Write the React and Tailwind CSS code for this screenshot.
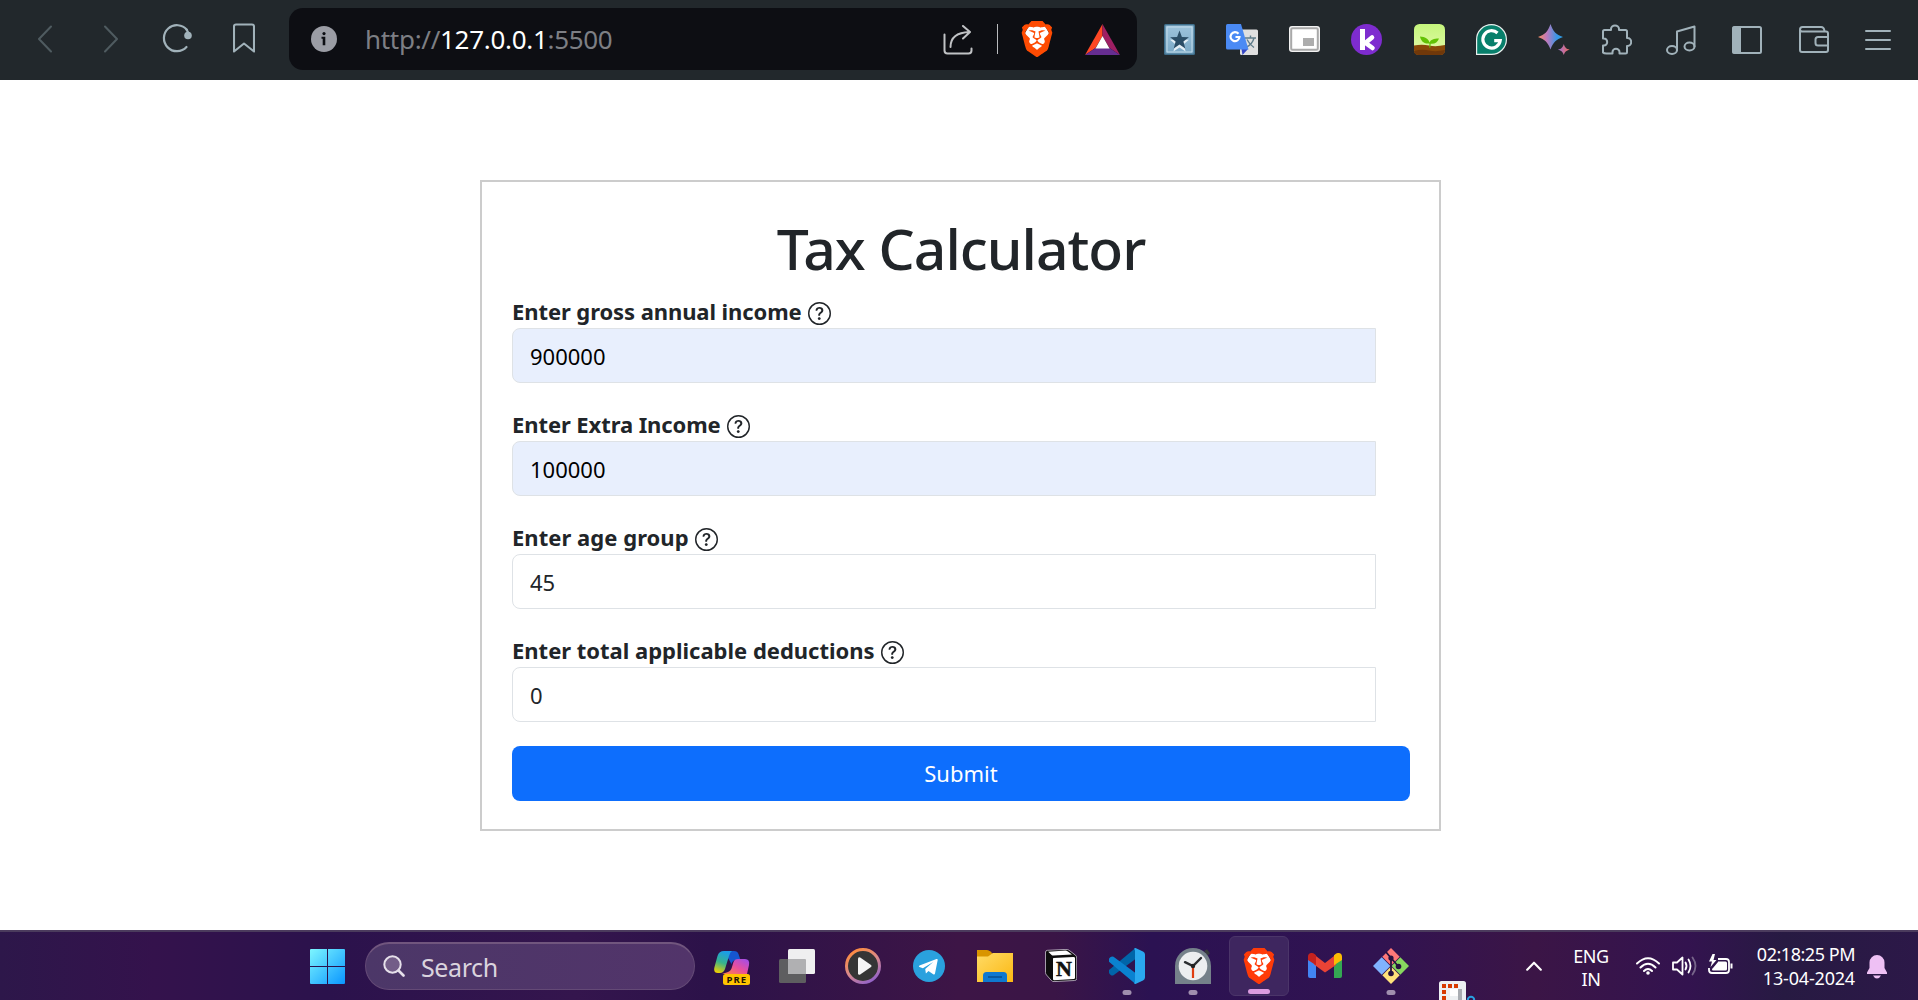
import React from "react";
import { BsQuestionCircle } from "react-icons/bs";
import { SiBrave } from "react-icons/si";

const font = "font-['Noto_Sans','Open_Sans',sans-serif]";

function Brave({ className }) {
  return (
    <span className={"relative flex shrink-0 items-center justify-center " + className}>
      <svg viewBox="0 0 24 24" className="absolute size-9">
        <path fill="#fff" d="M6.500 3.500h11l2.500 4.500-3 10-5 2-5-2L4 8z" />
      </svg>
      <SiBrave className="relative size-9 shrink-0" />
    </span>
  );
}

function Stroke({ className, children, color = "#a1b2ba", w = 2, vb }) {
  return (
    <svg viewBox={vb} className={"block shrink-0 " + className} fill="none" stroke={color} strokeWidth={w} strokeLinecap="round" strokeLinejoin="round">
      {children}
    </svg>
  );
}

function Toolbar() {
  return (
    <header className="flex h-20 items-start bg-[#22282c] pt-2">
      <Stroke vb="0 0 15 28" color="#4f5b60" className="ml-[37px] mt-[17px] h-7 w-[15px]"><path d="M14 1.500 2 14l12 12.500" /></Stroke>
      <Stroke vb="0 0 15 28" color="#4f5b60" className="ml-[52px] mt-[17px] h-7 w-[15px]"><path d="M1 1.500 13 14 1 26.500" /></Stroke>
      <Stroke vb="0 0 30 30" className="ml-[43px] mt-[15px] size-[30px]" w="2.200">
        <path d="M25 7a13 13 0 1 0-.5 17" />
        <circle cx="26" cy="12.500" r="3.800" fill="#a1b2ba" stroke="none" />
        <path d="M24.500 6.500 27 11" />
      </Stroke>
      <Stroke vb="0 0 22 30" className="ml-[41px] mt-[15px] h-[30px] w-[22px]" w="2.100">
        <path d="M3 1.500h16q2 0 2 2v25L11 20.500 1 28.500v-25q0-2 2-2z" />
      </Stroke>

      <div className="ml-[34px] flex h-[62px] w-[848px] items-center rounded-[14px] bg-[#0d0e13] pl-[22px]">
        <svg viewBox="0 0 26 26" className="size-[26px] shrink-0">
          <circle cx="13" cy="13" r="13" fill="#9b9da5" />
          <circle cx="13" cy="7.600" r="1.600" fill="#0d0e13" />
          <path fill="#0d0e13" d="M10.500 10.800h3.800v8.400h-2.600v-6.400h-1.200z" />
        </svg>
        <div className="ml-[28px] w-[251px] whitespace-nowrap text-[26px] leading-none tracking-[-0.3px] text-[#7d7f84]">
          http://<span className="text-white">127.0.0.1</span>:5500
        </div>
        <Stroke vb="0 0 30 30" color="#c0c2c5" className="ml-[327px] mt-0.5 size-[30px]">
          <path d="M1.500 9.500v16q0 3 3 3h21q3 0 3-3v-2" />
          <path d="M7.500 22c0-9 6-14.500 19-15M20 1l7 6-7 6.500" />
        </Stroke>
        <div className="ml-6 h-[30px] w-px bg-[#b9bbbe]" />
        <Brave className="ml-[23px] h-[35px] w-[31px] text-[#fe4b02]" />
        <svg viewBox="0 0 35 31" className="ml-[33px] h-[31px] w-[35px]">
          <path fill="#ff4724" d="M17.500 0 0 31l10.500-7 7-12z" />
          <path fill="#9e1f63" d="M17.500 0 35 31l-10.500-7-7-12z" />
          <path fill="#662d91" d="M0 31h35l-10.500-7h-14z" />
          <path fill="#fff" d="m17.500 12 7 12.500h-14z" />
        </svg>
      </div>

      <svg viewBox="0 0 31 31" className="ml-[27px] mt-4 size-[31px]">
        <defs><linearGradient id="starBg" x2="0" y2="1"><stop stopColor="#9dc3dc" /><stop offset="1" stopColor="#7ba9c6" /></linearGradient></defs>
        <rect width="31" height="31" rx="1.500" fill="#3f6f8c" />
        <path fill="url(#starBg)" d="M1.500 1.500h28v28h-28z" />
        <path fill="none" stroke="#c4dcea" d="M3 3h25v25H3z" />
        <path fill="#e4eef5" d="m15.500 9 2.600 6.500 6.900.3-5.400 4.500 2 7.100-6.100-4-6.100 4 2-7.100L6 15.800l6.900-.3z" />
        <path fill="#2b4d66" d="m15.500 6.500 2.400 6.500 7 .3-5.500 4.300 1.900 6.900-5.800-3.900-5.800 3.900 1.900-6.900-5.500-4.300 7-.3z" />
      </svg>
      <svg viewBox="0 0 32 31" className="ml-[31px] mt-4 h-[31px] w-8">
        <rect x="14" y="5.500" width="18" height="25.500" rx="1.500" fill="#e0e0e0" />
        <path fill="none" stroke="#607d8b" strokeWidth="1.400" d="M19 14h11M24.500 11.500V14M28 14c-1 4-4 7.500-8 9.500M21 15.500c1.500 3 4 6 7 8" />
        <path fill="#3547c5" d="M15.500 25H22l-5.500 6z" />
        <path fill="#4a8af4" d="M1.500 0H15l7.500 25.500h-21Q0 25.500 0 24V1.500Q0 0 1.500 0z" />
        <path fill="none" stroke="#fff" strokeWidth="2.200" d="M12.500 9.800a4.500 4.500 0 1 0 1 3.200H9.500" />
      </svg>
      <svg viewBox="0 0 31 26" className="ml-[31px] mt-[18px] h-[26px] w-[31px]">
        <rect width="31" height="26" rx="3" fill="#f2f2f2" />
        <rect x="2.200" y="2.200" width="26.600" height="21.600" rx="1.500" fill="#fff" stroke="#a9a9a9" strokeWidth="2" />
        <path fill="#adadad" d="M14 12h11v8H14z" />
      </svg>
      <svg viewBox="0 0 31 31" className="ml-[31px] mt-4 size-[31px]">
        <circle cx="15.500" cy="15.500" r="15.500" fill="#7e2ccf" />
        <path fill="none" stroke="#fff" strokeWidth="5" d="M11.500 5v21" />
        <path fill="none" stroke="#fff" strokeWidth="4.600" strokeLinecap="round" d="m21 13.500-6.500 5.300 7 5.200" />
      </svg>
      <svg viewBox="0 0 31 31" className="ml-8 mt-4 size-[31px]">
        <defs><linearGradient id="sky" x2="0" y2="1"><stop stopColor="#c5f57c" /><stop offset="1" stopColor="#e3fbaa" /></linearGradient></defs>
        <rect width="31" height="31" rx="5.500" fill="url(#sky)" />
        <path fill="#8a4a08" d="M0 21.500q8-1.500 15 0t16-.5v5q0 5-5 5H5q-5 0-5-5z" />
        <path fill="#70380a" d="M0 27q8-2 15-.5t16-.5q0 5-5 5H5q-5 0-5-4z" />
        <path fill="#62c204" d="M15.400 19.500C9 20 7 16.500 6 12.500c5 .5 8.500 2 9.500 6 1.500-3 4-4 9.500-4-1.500 4-4 5.500-8.300 5.200l-.4 4h-1z" />
      </svg>
      <svg viewBox="0 0 31 31" className="ml-[31px] mt-4 size-[31px]">
        <path fill="#087f6b" stroke="#e9efee" strokeWidth="1.200" d="M.6 30.400V15.500A14.900 14.900 0 1 1 15.500 30.400z" />
        <path fill="none" stroke="#fff" strokeWidth="3.200" d="M21.500 9a8.700 8.700 0 1 0 2.700 7.600h-6" />
      </svg>
      <svg viewBox="0 0 32 31" className="ml-[31px] mt-4 h-[31px] w-8">
        <defs>
          <linearGradient id="spark" x1="0" x2="1"><stop offset=".05" stopColor="#f08a6a" /><stop offset=".35" stopColor="#bf79bd" /><stop offset=".75" stopColor="#3a96e6" /><stop offset="1" stopColor="#2ba0e8" /></linearGradient>
          <linearGradient id="spark2" x1="0" x2="1"><stop stopColor="#9a74d8" /><stop offset="1" stopColor="#f26a5a" /></linearGradient>
        </defs>
        <path fill="url(#spark)" d="M12.500 0c2.500 7.500 5.500 10.500 12.500 13-7 2.500-10 5.500-12.500 12.500C10 18.500 7 15.500 0 13 7 10.500 10 7.500 12.500 0z" />
        <path fill="url(#spark2)" d="M25.800 20c1 3.500 2.300 4.800 5.900 5.700-3.600.9-4.900 2-5.900 5.300-1-3.300-2.300-4.400-5.900-5.300 3.600-.9 4.900-2.200 5.900-5.700z" />
      </svg>
      <Stroke vb="0 0 31 31" className="ml-[31px] mt-4 size-[31px]">
        <path d="M3.500 6h6.500V5a4 3.500 0 0 1 8 0v1h6.500q1.500 0 1.500 1.500V14h.5a3.700 4 0 0 1 0 8H26v6q0 1.500-1.500 1.500h-6V28a3.500 3.200 0 0 0-7 0v1.500h-6Q3 29.500 2 28.500v-7h1a3.200 3.500 0 0 0 0-7H2v-7Q2 6 3.500 6z" />
      </Stroke>
      <Stroke vb="0 0 30 30" className="ml-[34px] mt-[17px] size-[30px]">
        <ellipse cx="6" cy="25" rx="5" ry="4" /><ellipse cx="23.500" cy="21.500" rx="5" ry="4" />
        <path d="M11 25V6.500L28.500 1.500v20" />
      </Stroke>
      <Stroke vb="0 0 30 28" className="ml-9 mt-[18px] h-7 w-[30px]">
        <rect x="1" y="1" width="28" height="26" rx="1.500" /><path fill="#a1b2ba" d="M1.500 1.500H8v25H1.500z" />
      </Stroke>
      <Stroke vb="0 0 30 27" className="ml-[37px] mt-[18px] h-[27px] w-[30px]">
        <path d="M1 4v20q0 2 2 2h24q2 0 2-2V7.500q0-2-2-2H3.500Q1 5.500 1 3.500 1 1 3.500 1H22q3 0 3.500 4M29 11H19q-2.500 0-2.500 2.500v3.500q0 2.500 2.500 2.500h10" />
      </Stroke>
      <Stroke vb="0 0 26 22" className="ml-[36px] mt-[21px] h-[22px] w-[26px]"><path d="M1 2h24M1 11h24M1 20h24" /></Stroke>
    </header>
  );
}

const fields = [
  { label: "Enter gross annual income", value: "900000", filled: true, ls: "tracking-[-0.09px]" },
  { label: "Enter Extra Income", value: "100000", filled: true, ls: "tracking-[-0.09px]" },
  { label: "Enter age group", value: "45", ls: "tracking-[0.04px]" },
  { label: "Enter total applicable deductions", value: "0", ls: "tracking-[-0.01px]" },
];

function Calculator() {
  return (
    <main className="flex h-[850px] items-start bg-white pl-[480px] pt-[100px] text-[#212529]">
      <form className="h-[651px] w-[961px] border-2 border-[#ccc] pl-[30px] pr-[29px] pt-[30px]" onSubmit={(e) => e.preventDefault()}>
        <h1 className="h-[82px] whitespace-nowrap text-center text-[57px] font-[550] leading-[72px] tracking-[-1px]">Tax Calculator</h1>
        {fields.map((f) => (
          <div key={f.label} className="mb-[23px] h-[90px]">
            <label className={"flex h-[34px] items-center whitespace-nowrap text-[22px] font-bold leading-[34px] " + f.ls}>
              {f.label}
              <BsQuestionCircle className="ml-[6px] mt-1 size-[23px]" />
            </label>
            <input
              readOnly
              value={f.value}
              className={"block h-[55px] w-[864px] rounded-l-lg border border-[#dee2e6] px-[17px] text-[22px] outline-none " + (f.filled ? "bg-[#e8effd] text-black" : "bg-white")}
            />
          </div>
        ))}
        <button className="block h-[55px] w-[898px] rounded-lg bg-[#0d6efd] text-[22px] text-white">Submit</button>
      </form>
    </main>
  );
}

const Dot = () => <span className="absolute top-[42px] left-1/2 h-[5px] w-[9px] -translate-x-1/2 rounded-full bg-[#a08fae]" />;

function Taskbar() {
  return (
    <footer className="flex h-[70px] items-start overflow-hidden border-t-2 border-[#4b3b5d] bg-[linear-gradient(90deg,#2d174a_0%,#34124c_8%,#2b124c_17%,#34154d_30%,#2c1249_37%,#3d1546_50%,#3a1546_55%,#2b1252_60%,#311351_72%,#3b1546_80%,#33134f_88%,#271a42_93%,#2c1848_100%)]">
      <svg viewBox="0 0 35 35" className="ml-[310px] mt-[17px] size-[35px] shrink-0">
        <defs><linearGradient id="win" x2="1" y2="1"><stop stopColor="#7df6ff" /><stop offset="1" stopColor="#0a96ff" /></linearGradient></defs>
        <path fill="url(#win)" d="M1 0h16v17H0V1q0-1 1-1zM18 0h16q1 0 1 1v16H18zM0 18h17v17H1q-1 0-1-1zM18 18h17v16q0 1-1 1H18z" />
      </svg>
      <div className="ml-5 mt-[10px] flex h-12 w-[330px] shrink-0 items-center rounded-full border border-t-2 border-[#644a76] border-t-[#71567e] bg-[linear-gradient(90deg,#4c3768,#52346a)] pl-[17px]">
        <Stroke vb="0 0 22 22" color="#e6e0ea" w="2" className="size-[22px] -mt-px"><circle cx="9.500" cy="9.500" r="8.200" fill="#735d88" /><path strokeWidth="2.600" d="m15.500 15.500 5 5" /></Stroke>
        <span className="ml-4 mt-px text-[25px] leading-none tracking-[-0.4px] text-[#dad3de]">Search</span>
      </div>
      <svg viewBox="0 0 36 35" className="ml-[19px] mt-[18px] h-[35px] w-9 shrink-0">
        <defs>
          <linearGradient id="cpA" x1=".5" x2=".2" y2="1"><stop stopColor="#1b9de8" /><stop offset=".5" stopColor="#37b38d" /><stop offset="1" stopColor="#f5d000" /></linearGradient>
          <linearGradient id="cpB" x1="1" x2="0" y2="1"><stop stopColor="#9b4df0" /><stop offset=".5" stopColor="#e84f9e" /><stop offset="1" stopColor="#ff8a3d" /></linearGradient>
        </defs>
        <path fill="#1656d0" d="M10 1h10q3.500 0 4.500 3l2 6h-4q-4 0-5 4z" />
        <path fill="url(#cpB)" d="M24 9h7q5 0 4 6l-2 9H8l6-2q3-1 4-5l1.500-5Q20.500 9 24 9z" />
        <path fill="url(#cpA)" d="M10 1h8q-2 1-3 5l-4 13q-1.500 4-5 4H4q-5 0-3.500-6l3-11Q5 1 10 1z" />
        <rect x="9" y="24" width="27" height="11" rx="2.500" fill="#ffc400" />
        <text x="12.500" y="32.800" fontSize="9.500" fontWeight="700" fill="#1f1605" letterSpacing=".5" textLength="20">PRE</text>
      </svg>
      <svg viewBox="0 0 36 34" className="ml-[29px] mt-[17px] h-[34px] w-9 shrink-0">
        <rect y="10" width="27" height="24" rx="1.500" fill="#5e5e60" />
        <rect x="9" width="27" height="25" rx="1.500" fill="#efeff0" />
        <path fill="#b0b0b2" d="M9 10h17q1 0 1 1v14H10.500Q9 25 9 23.500z" />
      </svg>
      <svg viewBox="0 0 36 36" className="ml-[30px] mt-4 size-9 shrink-0">
        <defs><linearGradient id="ring" x1=".2" x2=".8" y2="1"><stop stopColor="#ff8c3c" /><stop offset=".5" stopColor="#d98a8c" /><stop offset="1" stopColor="#8e60cc" /></linearGradient></defs>
        <circle cx="18" cy="18" r="16.500" fill="#353535" stroke="url(#ring)" strokeWidth="3" />
        <path fill="#f4f4f4" d="M13.500 9.500q.8-.6 1.700 0L26 17q1.300 1 0 2L15.200 26.600q-1.700.8-2.200-.8V10.500z" />
      </svg>
      <svg viewBox="0 0 32 32" className="ml-8 mt-[18px] size-8 shrink-0">
        <circle cx="16" cy="16" r="16" fill="#2aa1de" />
        <path fill="#fff" d="M6.500 15.500 23.500 9q1.300-.3 1.200 1L22 23.500q-.4 1.700-1.800.8L15.500 21l-2.600 2.500-.7-4.500 8-7-10.300 6.200-3.500-1.200q-1.200-.7.100-1.500z" />
      </svg>
      <svg viewBox="0 0 36 32" className="ml-8 mt-[18px] h-8 w-9 shrink-0">
        <defs><linearGradient id="fold" x2="1" y2="1"><stop stopColor="#ffdb66" /><stop offset="1" stopColor="#fbb813" /></linearGradient></defs>
        <path fill="#d99500" d="M0 0h10q2 0 3.500 1.500L16 4v6H0z" />
        <path fill="url(#fold)" d="M0 6.500h11L16 3h20v29H0z" />
        <path fill="#0f78cf" d="M9.500 22h17q3.500 0 3.500 3.500V32H6v-6.500Q6 22 9.500 22z" />
        <path stroke="#064785" strokeWidth="1.300" d="M11 27h14" />
      </svg>
      <svg viewBox="0 0 32 33" className="ml-8 mt-[17px] h-[33px] w-8 shrink-0">
        <path fill="#0d0d0d" stroke="#c9c0cf" strokeWidth=".8" d="M.5 3q0-1.500 2-1.700L21 .4q2 0 3 .8l6.500 5q1.200 1 1.200 2.800v20.500q0 2-2 2L9 32.600q-1.500 0-2.500-1L1.500 26Q.5 25 .5 23.500z" />
        <path fill="#fff" d="M3.200 2.700 20.500 1.600q1.200 0 2 .6l4.500 3.300L8.300 6.600q-1 0-1.700-.5zM8.500 9l20-1.100q1.500 0 1.500 1.300v19.600q0 1.200-1.200 1.300L9.200 31.200Q8 31.200 8 30V9.500z" />
        <text x="11" y="27" fontFamily="Liberation Serif, serif" fontWeight="700" fontSize="22" fill="#111" stroke="#111" strokeWidth=".5">N</text>
      </svg>
      <div className="relative ml-8 mt-4 size-9 shrink-0">
        <svg viewBox="0 0 36 36" className="size-full">
          <path fill="#0065a9" d="M0 24.500V22L26.500 0v11L4.500 27.200Q3 28 1.700 27 0 25.500 0 24.500z" />
          <path fill="#0a82d0" d="M0 11v2.800L26.500 36V25L4.500 8.800Q3 8 1.700 9 0 10 0 11z" />
          <path fill="#2aa8ef" d="M26.500 0 34 3.500q2 1 2 3v23q0 2-2 3L26.500 36q-1 0-1.500-1 1 0 1-2V3q0-2-1-2 .5-1 1.500-1z" />
        </svg><Dot />
      </div>
      <div className="relative ml-[30px] mt-4 size-9 shrink-0">
        <svg viewBox="0 0 36 36" className="size-full">
          <path fill="#35383c" d="m29 3 3-1.800 3 4-2.600 2.600z" />
          <path fill="#75818a" d="M0 18a18 18 0 0 1 36 0v18H0z" />
          <circle cx="18" cy="18" r="14.300" fill="#eceef0" />
          <path stroke="#e03e12" strokeWidth="2.200" d="M18 18v12" />
          <path fill="none" stroke="#2b2d30" strokeWidth="2.400" strokeLinecap="round" d="m10 14.200 8 3.800 8-8" />
          <circle cx="18" cy="18" r="2.200" fill="#222" />
        </svg><Dot />
      </div>
      <div className="relative ml-[18px] mt-1 flex size-[60px] shrink-0 justify-center rounded-md border border-[#4b3569] bg-[#3e265f] pt-[11px]">
        <Brave className="h-9 w-[30px] text-[#ff3b08]" />
        <span className="absolute bottom-px left-[18px] h-[5px] w-[22px] rounded-full bg-[#dc9be0]" />
      </div>
      <svg viewBox="0 0 34 25" className="ml-[19px] mt-[21px] h-[25px] w-[34px] shrink-0">
        <path fill="#4285f4" d="M0 6v17q0 2 2 2h6V11z" /><path fill="#34a853" d="M34 6v17q0 2-2 2h-6V11z" />
        <path fill="#ea4335" d="M6 1.500 17 10l11-8.500V12l-11 7.500L6 11.500z" />
        <path fill="#c5221f" d="M0 3.500C0 0 4-1 6.500 1L8 2.200v10L0 7z" /><path fill="#fbbc04" d="M34 3.500C34 0 30-1 27.500 1L26 2.200v10L34 7z" />
      </svg>
      <div className="relative ml-[31px] mt-4 size-9 shrink-0">
        <svg viewBox="0 0 36 36" className="size-full">
          <path fill="#ff7878" d="m18 0 8.700 8.700L18 17.400 9.300 8.700z" /><path fill="#80b3ff" d="m8.700 9.300 8.700 8.700-8.700 8.700L0 18z" />
          <path fill="#87d75f" d="m27.300 9.300 8.700 8.700-8.700 8.700-8.700-8.700z" /><path fill="#ffe27a" d="m18 18.600 8.700 8.700L18 36l-8.700-8.700z" />
          <path stroke="#26123f" strokeWidth="1.800" fill="none" d="m13 4 5 6v16M18 10l7 8" />
          <circle cx="18" cy="10" r="2.600" fill="#26123f" /><circle cx="25.500" cy="18.500" r="2.800" fill="#26123f" /><circle cx="18" cy="25.500" r="2.800" fill="#26123f" />
        </svg><Dot />
      </div>
      <svg viewBox="0 0 37 19" className="ml-[30px] mt-[49px] h-[19px] w-[37px] shrink-0">
        <rect width="27" height="24" rx="2.500" fill="#edf0f2" /><path fill="#a9adb2" d="M19 8h4v11h-4z" />
        <path fill="#fff" d="M11 8h8v7h-8z" />
        <path fill="#d83b01" d="M3 3h4v4H3zM9 3h4v4H9zM15 3h4v4h-4zM3 9h4v4H3zM3 15h4v4H3z" />
        <circle cx="32" cy="19" r="3.200" fill="none" stroke="#28a0e0" strokeWidth="2" />
      </svg>

      <Stroke vb="0 0 16 10" color="#fff" w="2.100" className="ml-[50px] mt-[29px] h-[10px] w-4"><path d="m1.200 8.700 6.800-7 6.800 7" /></Stroke>
      <div className="ml-[22px] mt-[13px] w-[54px] shrink-0 text-center text-[18px] leading-[23px] tracking-[-0.5px] text-white">ENG<br />IN</div>
      <svg viewBox="0 0 24 18" className="ml-[18px] mt-[25px] h-[18px] w-6 shrink-0" fill="none" stroke="#fff" strokeWidth="2" strokeLinecap="round">
        <path d="M1 6.500q11-10.500 22 0M4.500 10.500q7.500-7.500 15 0M8 14q4-4 8 0" /><circle cx="12" cy="16" r="1.800" fill="#fff" stroke="none" />
      </svg>
      <svg viewBox="0 0 25 20" className="ml-3 mt-6 h-5 w-[25px] shrink-0" fill="none" stroke="#fff" strokeWidth="1.800" strokeLinecap="round" strokeLinejoin="round">
        <path d="M1 6.500h4l5.500-5v17l-5.500-5H1zM13.500 6.500q2 3.500 0 7M16.500 3.500q4 6.500 0 13" /><path stroke="#77658a" d="M20.500 1.500q6 8.500 0 17" />
      </svg>
      <svg viewBox="0 0 25 20" className="ml-[11px] mt-[22px] h-5 w-[25px] shrink-0" fill="none" stroke="#fff" strokeWidth="1.800">
        <path d="M10 5h8q3 0 3 3v8q0 3-3 3H4q-3 0-3-3v-2" /><path fill="#fff" stroke="none" d="M10 7.500h7.500q1.500 0 1.500 1.500v6q0 1.500-1.500 1.500H5q-1 0-1-1.500l1-1 5-6zM22.500 9.500h2v5h-2zM4.500 0 1 7.500h3L2.500 13 8.500 6H5.500L7 0z" />
      </svg>
      <div className="ml-[19px] mt-[10px] w-[103px] shrink-0 whitespace-nowrap text-right text-[18px] leading-6 tracking-[-0.47px] text-white">02:18:25 PM<br /><span className="tracking-[-0.18px]">13-04-2024</span></div>
      <svg viewBox="0 0 20 24" className="ml-[12px] mt-[23px] h-6 w-5 shrink-0" fill="#eec0f4">
        <path d="M10 0a7.500 7.500 0 0 1 7.500 7.500V13l2.500 4.500V19H0v-1.500L2.500 13V7.500A7.500 7.500 0 0 1 10 0zM6 20.500h8q-1.500 3-4 3t-4-3z" />
      </svg>
    </footer>
  );
}

export default function App() {
  return (
    <div className={"h-[1000px] w-[1918px] overflow-hidden " + font}>
      <Toolbar />
      <Calculator />
      <Taskbar />
    </div>
  );
}
